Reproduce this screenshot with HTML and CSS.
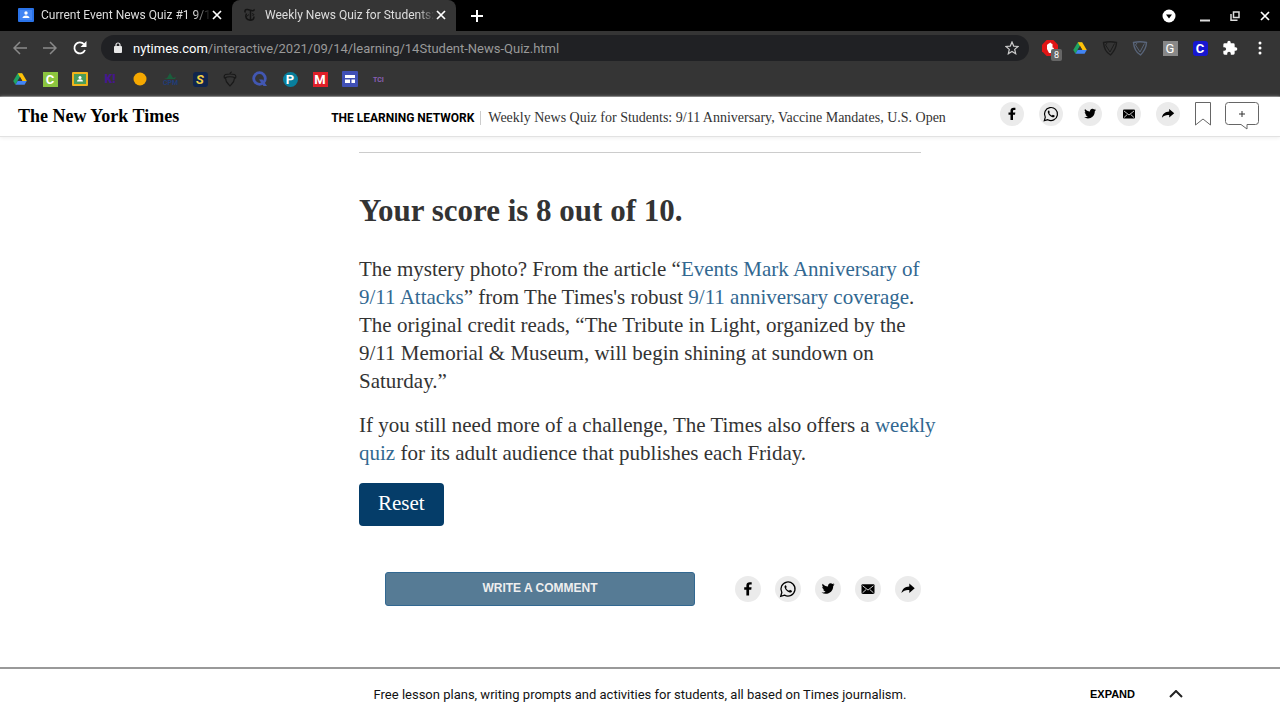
FILE: index.html
```html
<!DOCTYPE html>
<html lang="en">
  <head>
    <meta charset="UTF-8" />
    <meta name="viewport" content="width=device-width, initial-scale=1.0" />
    <title>Weekly News Quiz for Students</title>
    <link rel="stylesheet" href="styles.css">
  </head>
  <body>
    <!-- icons used more than once -->
    <svg class="sprite" aria-hidden="true">
      <symbol id="drive" viewBox="0 0 24 24">
        <path d="M8.2 2h7.6L8 15.5 4.2 22 .4 15.5z" fill="#1ea362" />
        <path d="M8.2 2h7.6l7.8 13.5H16z" fill="#ffc107" />
        <path d="M8 15.5h15.6L19.8 22H4.2z" fill="#4285f4" />
        <path d="M12 8.7l3.9 6.8H8z" fill="#353535" />
      </symbol>
      <symbol id="facebook" viewBox="0 0 24 24">
        <path d="M13 18v-5.3h2l.3-2.300H13V9c0-.7.3-1.100 1.200-1.100h1.200V5.800c-.3 0-1-.1-1.800-.1-1.900 0-3.100 1.100-3.100 3v1.700H8.500v2.300h2V18z" />
      </symbol>
      <symbol id="whatsapp" viewBox="0 0 24 24">
        <path d="M5.300 18.700l1-3.500a6.500 6.500 0 1 1 2.500 2.500z" fill="none" stroke="#000" stroke-width="1.200" />
        <path d="M9.700 8.600c-.8.400-1.100 1.200-.8 2.100.7 2.200 2.300 3.800 4.600 4.500 1.100.3 2-.2 2.200-1.200l-.2-.5-1.700-.8-.8.900c-1.300-.5-2.200-1.400-2.800-2.600l.6-.8-.7-1.600z" />
      </symbol>
      <symbol id="twitter" viewBox="0 0 24 24">
        <path d="M18 7.700c-.4.200-.9.300-1.300.4.500-.3.800-.7 1-1.300-.5.300-.9.500-1.500.6a2.500 2.500 0 0 0-4.200 2.200c-2-.1-3.800-1-5-2.500-.7 1.200-.2 2.500.7 3.200-.4 0-.7-.1-1-.3 0 1.200.8 2.200 1.900 2.500-.3.100-.7.100-1.100 0 .3 1 1.200 1.700 2.300 1.700A5 5 0 0 1 6 15.300c4.900 3 10.900-.2 10.800-6.100.5-.4.900-.9 1.200-1.500z" />
      </symbol>
      <symbol id="mail" viewBox="0 0 24 24">
        <rect x="6" y="7.500" width="12" height="9" rx="1" />
        <path d="M7 9l5 4 5-4M7 15.500l3.300-3M17 15.500l-3.300-3" fill="none" stroke="#eee" stroke-width=".8" />
      </symbol>
      <symbol id="share" viewBox="0 0 24 24">
        <path d="M18.200 11.300l-5-4.300v2.600c-4 .1-6.600 2.300-7.300 6.200 2-2.400 4.300-3.100 7.300-2.800v2.600z" />
      </symbol>
      <symbol id="close" viewBox="0 0 12 12">
        <path d="M2 2l8 8M10 2l-8 8" fill="none" stroke="#fff" stroke-width="1.700" />
      </symbol>
      <symbol id="shield" viewBox="0 0 16 16">
        <path d="M1.500 2.500c4-1 9-1 13 0-.2 5-2.500 9-6 12.500C4 12.500 2 8.500 1.500 2.500z" fill="none" stroke="currentColor" stroke-width="1.400" />
        <path d="M5 3l-1.500 2 4.500 7 4.500-8.500" fill="none" stroke="currentColor" stroke-width="1" />
      </symbol>
    </svg>

    <div class="browser">
      <div class="tabs">
        <div class="tab">
          <svg class="favicon" viewBox="0 0 16 16">
            <rect y="1" width="16" height="14" rx="1" fill="#2a73e8" />
            <rect x="2" y="3" width="12" height="10" fill="#4285f4" />
            <circle cx="8" cy="6" r="1.700" fill="#fff" />
            <path d="M4.500 11c0-3.500 7-3.500 7 0z" fill="#fff" />
          </svg>
          <span class="tabTitle">Current Event News Quiz #1 9/14</span>
          <button aria-label="Close tab"><svg width="12" height="12"><use href="#close" /></svg></button>
        </div>
        <div class="tab active">
          <svg class="favicon" viewBox="0 0 16 16">
            <path d="M3.500 5.500C2 4 3.500 2 5.500 2.500l5 1.300c1.500.2 2-.8 1.200-1.500M4.500 6.500c-1.500 3-.5 6.500 3.500 6.800 2.500 0 4-1.500 4-3.800M8.500 4v9" fill="none" stroke="#141414" stroke-width="1.500" />
            <path d="M4.500 9.500l2.500-2M10 6.500l2 1-1.500 1.500" fill="none" stroke="#141414" />
          </svg>
          <span class="tabTitle">Weekly News Quiz for Students: 9</span>
          <button aria-label="Close tab"><svg width="12" height="12"><use href="#close" /></svg></button>
        </div>
        <button class="newTab" aria-label="New tab">
          <svg width="12" height="12" viewBox="0 0 12 12"><path d="M6 0v12M0 6h12" stroke="#fff" stroke-width="2" /></svg>
        </button>
        <div class="windowButtons">
          <button aria-label="Search tabs">
            <svg width="14" height="14" viewBox="0 0 14 14"><circle cx="7" cy="7" r="6.500" fill="#fff" /><path d="M4 5.500h6L7 9.500z" fill="#000" /></svg>
          </button>
          <button aria-label="Minimize">
            <svg width="10" height="12" viewBox="0 0 10 12"><path d="M0 10.500h10" stroke="#ddd" stroke-width="2" /></svg>
          </button>
          <button aria-label="Restore">
            <svg width="10" height="10" viewBox="0 0 10 10"><path d="M3.500 1h5.500v5.500H3.500zM1 3v6.200h6.500" fill="none" stroke="#ddd" stroke-width="1.500" /></svg>
          </button>
          <button aria-label="Close window"><svg width="12" height="12"><use href="#close" /></svg></button>
        </div>
      </div>

      <div class="toolbar">
        <button aria-label="Back">
          <svg width="14" height="14" viewBox="0 0 14 14"><path d="M14 7H1.500M7 1L1 7l6 6" fill="none" stroke="#8a8a8a" stroke-width="1.500" /></svg>
        </button>
        <button aria-label="Forward">
          <svg width="14" height="14" viewBox="0 0 14 14"><path d="M0 7h12.500M7 1l6 6-6 6" fill="none" stroke="#8a8a8a" stroke-width="1.500" /></svg>
        </button>
        <button aria-label="Reload">
          <svg width="14" height="14" viewBox="0 0 14 14"><path d="M12 9A5.500 5.500 0 1 1 11 3.200" fill="none" stroke="#fff" stroke-width="1.800" /><path d="M13.500 0v6h-6z" fill="#fff" /></svg>
        </button>
        <div class="address">
          <svg width="8" height="12" viewBox="0 0 8 12"><rect y="4" width="8" height="7" rx="1" fill="#e8e8e8" /><path d="M2 5V3a2 2 0 0 1 4 0v2" fill="none" stroke="#e8e8e8" stroke-width="1.200" /></svg>
          <span class="url"><b>nytimes.com</b>/interactive/2021/09/14/learning/14Student-News-Quiz.html</span>
          <button aria-label="Bookmark this tab">
            <svg width="14" height="14" viewBox="0 0 14 14"><path d="M7 1l1.700 4.100 4.300.4-3.300 2.900 1 4.300L7 10.400l-3.700 2.300 1-4.300L1 5.500l4.300-.4z" fill="none" stroke="#ccc" stroke-width="1.200" /></svg>
          </button>
        </div>
        <button class="adblock" aria-label="Ad blocker, 8 blocked">
          <svg width="16" height="16" viewBox="0 0 16 16"><path d="M4.700 0h6.600L16 4.700v6.600L11.300 16H4.700L0 11.300V4.700z" fill="#e01616" /><path d="M5 5v4l2 4h3l2-5-1.500-.5V4l-1.200-.5-1-1L7 3.500 6 4z" fill="#fff" /></svg>
          <span class="badge">8</span>
        </button>
        <button aria-label="Drive"><svg width="14" height="14"><use href="#drive" /></svg></button>
        <button class="dark" aria-label="Shield"><svg width="16" height="16"><use href="#shield" /></svg></button>
        <button class="slate" aria-label="Shield"><svg width="16" height="16"><use href="#shield" /></svg></button>
        <button aria-label="Grammar"><span class="tile grey">G</span></button>
        <button aria-label="Clever"><span class="tile blue">C</span></button>
        <button aria-label="Extensions">
          <svg width="16" height="16" viewBox="0 0 24 24"><path d="M20.500 11H19V7a2 2 0 0 0-2-2h-4V3.500a2.500 2.500 0 0 0-5 0V5H4a2 2 0 0 0-2 2v3.800h1.500a2.700 2.700 0 0 1 0 5.400H2V20a2 2 0 0 0 2 2h3.800v-1.500a2.700 2.700 0 0 1 5.400 0V22H17a2 2 0 0 0 2-2v-4h1.500a2.500 2.500 0 0 0 0-5z" fill="#fff" /></svg>
        </button>
        <button aria-label="Menu">
          <svg width="4" height="14" viewBox="0 0 4 14"><g fill="#fff"><circle cx="2" cy="2" r="1.500" /><circle cx="2" cy="7" r="1.500" /><circle cx="2" cy="12" r="1.500" /></g></svg>
        </button>
      </div>

      <nav class="bookmarks">
        <a href="#" aria-label="Drive"><svg width="14" height="14"><use href="#drive" /></svg></a>
        <a href="#" aria-label="Canvas"><span class="tile green">C</span></a>
        <a href="#" aria-label="Classroom">
          <svg width="16" height="14" viewBox="0 0 16 14"><rect width="16" height="14" rx="1" fill="#f0b41c" /><rect x="2" y="2" width="12" height="10" fill="#4a9d5b" /><circle cx="8" cy="5.500" r="1.500" fill="#fff" /><path d="M5 9.500c0-3 6-3 6 0z" fill="#fff" /></svg>
        </a>
        <a href="#" aria-label="Kahoot"><span class="mark">K!</span></a>
        <a href="#" aria-label="Orange"><svg width="14" height="14" viewBox="0 0 14 14"><circle cx="7" cy="7" r="6.500" fill="#f5a800" /></svg></a>
        <a href="#" aria-label="CPM">
          <svg width="16" height="14" viewBox="0 0 16 14"><path d="M2 7l3-1 3-5 3 5 3-1-1 2z" fill="#1b5e3c" /><text class="tiny" x="1" y="13" fill="#203c78">CPM</text></svg>
        </a>
        <a href="#" aria-label="Schoology"><span class="tile navy">S</span></a>
        <a href="#" aria-label="Acorn">
          <svg width="14" height="16" viewBox="0 0 14 16"><path d="M1.500 7C0 3 4 3 7 3s7 0 5.500 4c-3-1.500-8-1.500-11 0zM2.500 7c0 4.500 3 6 4.500 8 1.500-2 4.500-3.500 4.500-8M7 3c0-1 1-2 2-2" fill="none" stroke="#191919" stroke-width="1.200" /></svg>
        </a>
        <a href="#" aria-label="Quizlet">
          <svg width="16" height="16" viewBox="0 0 16 16"><circle cx="7.500" cy="7.500" r="5.800" fill="none" stroke="#4257b2" stroke-width="2.800" /><path d="M7 8.500h3.500l4.500 6.500h-3.500z" fill="#4257b2" /></svg>
        </a>
        <a href="#" aria-label="Pearson"><span class="tile teal">P</span></a>
        <a href="#" aria-label="Math"><span class="tile red">M</span></a>
        <a href="#" aria-label="Sites">
          <svg width="16" height="16" viewBox="0 0 16 16"><rect width="16" height="16" rx="1" fill="#4050b5" /><path d="M3 4h10v3H3zM3 8.500h5V12H3zM9.500 8.500H13V12H9.500z" fill="#fff" /></svg>
        </a>
        <a href="#" aria-label="TCI">
          <svg width="16" height="10" viewBox="0 0 16 10"><text class="tiny" x="1" y="8" fill="#8a5fb5">TCI</text></svg>
        </a>
      </nav>
    </div>

    <header class="masthead">
      <a class="logo" href="#">The New York Times</a>
      <div class="headline">
        <a href="#">The Learning Network</a>
        <span>Weekly News Quiz for Students: 9/11 Anniversary, Vaccine Mandates, U.S. Open</span>
      </div>
      <div class="tools">
        <div class="share">
          <button aria-label="Facebook"><svg><use href="#facebook" /></svg></button>
          <button aria-label="WhatsApp"><svg><use href="#whatsapp" /></svg></button>
          <button aria-label="Twitter"><svg><use href="#twitter" /></svg></button>
          <button aria-label="Email"><svg><use href="#mail" /></svg></button>
          <button aria-label="Share"><svg><use href="#share" /></svg></button>
        </div>
        <button aria-label="Save">
          <svg width="16" height="24" viewBox="0 0 16 24"><path d="M.5.500h15v22.500L8 17 .5 23z" fill="none" stroke="#666" /></svg>
        </button>
        <button aria-label="Comments">
          <svg width="34" height="28" viewBox="0 0 34 28"><path d="M3.500.500h27a3 3 0 0 1 3 3v16a3 3 0 0 1-3 3H22V27l-6-4.500H3.500a3 3 0 0 1-3-3v-16a3 3 0 0 1 3-3z" fill="none" stroke="#666" /><path d="M17 9v6M14 12h6" stroke="#333" /></svg>
        </button>
      </div>
    </header>

    <main>
      <h1>Your score is 8 out of 10.</h1>
      <p>
        The mystery photo? From the article “<a href="#">Events Mark Anniversary of<br>
        9/11 Attacks</a>” from The Times's robust <a href="#">9/11 anniversary coverage</a>.<br>
        The original credit reads, “The Tribute in Light, organized by the<br>
        9/11 Memorial &amp; Museum, will begin shining at sundown on<br>
        Saturday.”
      </p>
      <p>
        If you still need more of a challenge, The Times also offers a <a href="#">weekly<br>
        quiz</a> for its adult audience that publishes each Friday.
      </p>
      <button class="reset">Reset</button>
      <div class="actions">
        <button class="comment">Write a comment</button>
        <div class="share large">
          <button aria-label="Facebook"><svg><use href="#facebook" /></svg></button>
          <button aria-label="WhatsApp"><svg><use href="#whatsapp" /></svg></button>
          <button aria-label="Twitter"><svg><use href="#twitter" /></svg></button>
          <button aria-label="Email"><svg><use href="#mail" /></svg></button>
          <button aria-label="Share"><svg><use href="#share" /></svg></button>
        </div>
      </div>
    </main>

    <footer>
      <p>Free lesson plans, writing prompts and activities for students, all based on Times journalism.</p>
      <button class="expand">
        Expand
        <svg width="14" height="8" viewBox="0 0 14 8"><path d="M1 7l6-6 6 6" fill="none" stroke="#222" stroke-width="2" /></svg>
      </button>
    </footer>
  </body>
</html>
```
FILE: styles.css
```css
* {
  margin: 0;
  padding: 0;
  box-sizing: border-box;
}
body {
  display: flex;
  flex-direction: column;
  min-height: 100vh;
  font-family: "Liberation Sans", Arial, sans-serif;
  color: #333;
  background: #fff;
}
button {
  border: 0;
  background: none;
  font: inherit;
  color: inherit;
  cursor: pointer;
}
a {
  color: #326891;
  text-decoration: none;
}
svg {
  display: block;
}
.sprite {
  position: absolute;
  width: 0;
  height: 0;
}

/* browser bars */
.browser {
  font-family: Roboto, sans-serif;
  background: #353535;
  border-bottom: 1px solid #666;
}
.tabs {
  display: flex;
  height: 31px;
  background: #000;
}
.tab {
  display: flex;
  align-items: center;
  width: 232px;
  padding: 0 9px 2px 18px;
  font-size: 12px;
  color: #ddd;
}
.tab.active {
  width: 224px;
  padding-left: 10px;
  background: #353535;
  border-radius: 8px 8px 0 0;
}
.favicon {
  flex: none;
  width: 16px;
  height: 16px;
}
.tabTitle {
  flex: 1;
  margin-left: 7px;
  overflow: hidden;
  white-space: nowrap;
  -webkit-mask-image: linear-gradient(to right, #000 90%, transparent);
  mask-image: linear-gradient(to right, #000 90%, transparent);
}
.newTab {
  padding: 0 15px;
}
.windowButtons {
  display: flex;
  margin-left: auto;
}
.windowButtons button,
.toolbar > button,
.bookmarks a {
  display: flex;
  align-items: center;
  justify-content: center;
  width: 30px;
}
.windowButtons button:first-child {
  margin-right: 6px;
}
.toolbar {
  display: flex;
  height: 34px;
  padding: 0 5px;
}
.address {
  display: flex;
  flex: 1;
  align-items: center;
  height: 26px;
  margin: 4px 6px;
  padding: 0 10px 0 13px;
  font-size: 13px;
  color: #999;
  background: #202124;
  border-radius: 13px;
}
.address b {
  font-weight: 400;
  color: #fff;
}
.url {
  flex: 1;
  margin-left: 11px;
}
.toolbar .adblock {
  position: relative;
}
.badge {
  position: absolute;
  right: 3px;
  bottom: 4px;
  width: 11px;
  font-size: 9px;
  line-height: 12px;
  color: #fff;
  background: #666;
  border-radius: 2px;
}
.dark {
  color: #1c1c1c;
}
.slate {
  color: #59657a;
}
.tile {
  width: 15px;
  height: 15px;
  font-size: 13px;
  font-weight: 700;
  line-height: 15px;
  text-align: center;
  color: #fff;
}
.grey {
  font-weight: 400;
  background: #888;
}
.blue {
  background: #1717d0;
  border-radius: 3px;
}
.green {
  background: #8bc53f;
}
.navy {
  font-style: italic;
  color: #f2d046;
  background: #10254e;
  border-radius: 3px;
}
.teal {
  background: #087f9d;
  border-radius: 50%;
}
.red {
  background: #df1f28;
}
.mark {
  font-size: 12px;
  font-weight: 900;
  color: #46178f;
}
.tiny {
  font-size: 7px;
  font-weight: 700;
}
.bookmarks {
  display: flex;
  height: 31px;
  padding: 0 5px 3px;
}

/* masthead */
.masthead {
  display: grid;
  grid-template-columns: 1fr auto 1fr;
  align-items: center;
  height: 40px;
  padding: 0 21px 0 18px;
  border-bottom: 1px solid #e2e2e2;
  box-shadow: 0 1px 4px #eee;
}
.logo {
  font-family: "Liberation Serif", serif;
  font-size: 18px;
  font-weight: 700;
  color: #000;
}
.headline {
  display: flex;
  align-items: center;
  padding-top: 2px;
  font-family: "Liberation Serif", serif;
  font-size: 14px;
}
.headline a {
  padding-right: 6px;
  border-right: 1px solid #ccc;
  font-family: Roboto, sans-serif;
  font-size: 12px;
  font-weight: 700;
  text-transform: uppercase;
  color: #000;
}
.headline span {
  margin-left: 7px;
}
.tools {
  display: flex;
  justify-content: flex-end;
  gap: 14px;
  padding-bottom: 6px;
}
.tools > button {
  height: 24px;
}
.share {
  display: flex;
  gap: 15px;
}
.tools .share {
  margin-right: 1px;
}
.share button {
  width: 24px;
  height: 24px;
  background: #ebebeb;
  border-radius: 50%;
}
.share svg {
  width: 100%;
  height: 100%;
}
.large {
  gap: 14px;
}
.large button {
  width: 26px;
  height: 26px;
}

/* quiz result */
main {
  width: 100%;
  max-width: 562px;
  margin: 15px auto 60px;
  border-top: 1px solid #ccc;
  font-family: "Liberation Serif", serif;
  font-size: 21px;
  line-height: 28px;
}
h1 {
  margin: 38px 0 24px;
  font-size: 31px;
  line-height: 40px;
}
main p {
  margin-bottom: 16px;
  white-space: nowrap;
}
.reset {
  padding: 6px 19px 9px;
  color: #fff;
  background: #053d69;
  border-radius: 4px;
}
.actions {
  display: flex;
  align-items: center;
  gap: 40px;
  margin: 46px 0 0 26px;
}
.comment {
  flex: 1;
  height: 34px;
  padding-bottom: 2px;
  border: 1px solid #326891;
  border-radius: 3px;
  font-family: "Liberation Sans", Arial, sans-serif;
  font-size: 12px;
  font-weight: 700;
  line-height: 16px;
  text-transform: uppercase;
  color: #eee;
  background: #567b95;
}

footer {
  display: grid;
  grid-template-columns: 1fr auto 1fr;
  align-items: center;
  height: 53px;
  margin-top: auto;
  padding-bottom: 1px;
  border-top: 2px solid #999;
  font-family: Roboto, sans-serif;
  font-size: 13px;
  color: #121212;
}
footer p {
  grid-column: 2;
}
.expand {
  display: flex;
  align-items: center;
  justify-self: end;
  gap: 34px;
  margin-right: 97px;
  font-family: "Liberation Sans", Arial, sans-serif;
  font-size: 11px;
  font-weight: 700;
  text-transform: uppercase;
  color: #000;
}
```
